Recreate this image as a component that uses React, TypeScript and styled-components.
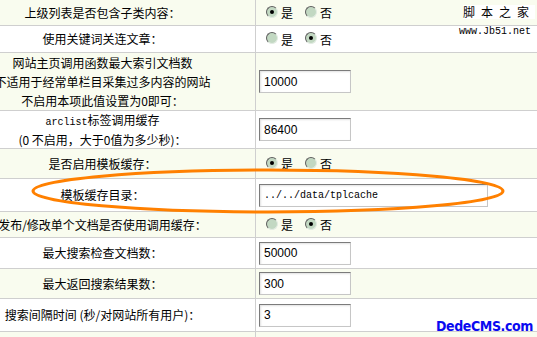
import React from 'react';
import styled, { createGlobalStyle } from 'styled-components';

const GlobalStyle = createGlobalStyle`
  html, body {
    margin: 0;
    padding: 0;
    background: #fff;
    overflow: hidden;
  }
`;

const Page = styled.div`
  position: relative;
  width: 537px;
  height: 337px;
  overflow: hidden;
  font-family: "Noto Sans CJK SC", "Liberation Sans", sans-serif;
  font-size: 12px;
  color: #000;
`;

const Table = styled.div`
  margin-left: -50px;
  width: 640px;
  display: flex;
  flex-direction: column;
`;

const Row = styled.div<{ $h: number; $alt: boolean }>`
  display: grid;
  grid-template-columns: 306px 1fr;
  height: ${(p: { $h: number }) => p.$h}px;
  background: ${(p: { $alt: boolean }) => (p.$alt ? '#f9fcef' : '#ffffff')};
  border-bottom: 1px solid #cfcfcf;
  flex-shrink: 0;
`;

const Label = styled.div<{ $lh: number }>`
  display: flex;
  flex-direction: column;
  align-items: center;
  justify-content: center;
  text-align: center;
  white-space: nowrap;
  line-height: ${(p: { $lh: number }) => p.$lh}px;
  border-right: 1px solid #cfcfcf;
`;

const Mono = styled.span`
  font-family: "Liberation Mono", "DejaVu Sans Mono", monospace;
  font-size: 10px;
`;

const Value = styled.div`
  display: flex;
  align-items: center;
  padding-left: 3px;
`;

const RadioGroup = styled.div`
  display: flex;
  align-items: center;
  padding-left: 7px;
`;

const RadioItem = styled.label`
  display: flex;
  align-items: center;
  margin-right: 12px;
`;

const RadioDot = styled.span<{ $on: boolean }>`
  position: relative;
  width: 12px;
  height: 12px;
  border-radius: 50%;
  box-sizing: border-box;
  background: #c2d8c2;
  border: 1px solid;
  border-color: #5f5f5f #e2ebe2 #e2ebe2 #5f5f5f;
  margin-right: 3px;
  margin-top: -2px;

  &::after {
    content: '';
    display: ${(p: { $on: boolean }) => (p.$on ? 'block' : 'none')};
    position: absolute;
    left: 3px;
    top: 3px;
    width: 4px;
    height: 4px;
    border-radius: 50%;
    background: #000;
  }
`;

const TextInput = styled.div<{ $w: number; $mono?: boolean }>`
  width: ${(p: { $w: number }) => p.$w}px;
  height: 23px;
  box-sizing: border-box;
  background: #fff;
  border: 1px solid;
  border-color: #7b7b7b #c6c6c6 #c6c6c6 #7b7b7b;
  box-shadow: inset 1px 1px 2px rgba(0, 0, 0, 0.12);
  display: flex;
  align-items: center;
  padding-left: 4px;
  font-family: ${(p: { $mono?: boolean }) =>
    p.$mono ? '"Liberation Mono", "DejaVu Sans Mono", monospace' : '"Liberation Sans", Arial, sans-serif'};
  font-size: ${(p: { $mono?: boolean }) => (p.$mono ? '10px' : '12px')};
`;

const Watermark = styled.div`
  position: absolute;
  top: 5px;
  right: 8px;
  display: flex;
  flex-direction: column;
  align-items: flex-end;
`;

const WaterTitle = styled.span`
  background: #fff;
  letter-spacing: 6px;
  margin-right: -6px;
  line-height: 14px;
  font-size: 12px;
`;

const WaterUrl = styled.span`
  font-family: "Liberation Mono", "DejaVu Sans Mono", monospace;
  font-size: 10px;
  line-height: 12px;
  margin-top: 7px;
  margin-right: -2px;
`;

const DedeMark = styled.div`
  position: absolute;
  right: 4px;
  bottom: 4px;
  font-family: "DejaVu Sans Condensed", "DejaVu Sans", sans-serif;
  font-stretch: condensed;
  font-weight: bold;
  font-size: 14px;
  letter-spacing: -0.4px;
  color: #0a0af0;
  line-height: 14px;
`;

const Overlay = styled.svg`
  position: absolute;
  left: 0;
  top: 0;
  pointer-events: none;
`;

type RowData = {
  h: number;
  lh?: number;
  label: React.ReactNode[];
  kind: 'radio' | 'input' | 'empty';
  on?: boolean;
  value?: string;
  w?: number;
  mono?: boolean;
};

const rows: RowData[] = [
  { h: 25, label: ['上级列表是否包含子类内容：'], kind: 'radio', on: true },
  { h: 26, label: ['使用关键词关连文章：'], kind: 'radio', on: false },
  {
    h: 57,
    lh: 19,
    label: ['网站主页调用函数最大索引文档数', '不适用于经常单栏目采集过多内容的网站', '不启用本项此值设置为0即可：'],
    kind: 'input',
    value: '10000',
  },
  {
    h: 37,
    lh: 17,
    label: [
      <span key="a"><Mono>arclist</Mono>标签调用缓存</span>,
      '(0 不启用，大于0值为多少秒)：',
    ],
    kind: 'input',
    value: '86400',
  },
  { h: 29, label: ['是否启用模板缓存：'], kind: 'radio', on: true },
  { h: 32, label: ['模板缓存目录：'], kind: 'input', value: '../../data/tplcache', w: 229, mono: true },
  { h: 25, label: ['发布/修改单个文档是否使用调用缓存：'], kind: 'radio', on: false },
  { h: 30, label: ['最大搜索检查文档数：'], kind: 'input', value: '50000' },
  { h: 29, label: ['最大返回搜索结果数：'], kind: 'input', value: '300' },
  { h: 32, label: ['搜索间隔时间 (秒/对网站所有用户)：'], kind: 'input', value: '3' },
  { h: 30, label: [''], kind: 'empty' },
];

const Radios: React.FC<{ on: boolean }> = ({ on }) => (
  <RadioGroup>
    <RadioItem>
      <RadioDot $on={on} />是
    </RadioItem>
    <RadioItem>
      <RadioDot $on={!on} />否
    </RadioItem>
  </RadioGroup>
);

const App: React.FC = () => {
  return (
    <Page>
      <GlobalStyle />
      <Table>
        {rows.map((row, i) => (
          <Row key={i} $h={row.h} $alt={i % 2 === 0}>
            <Label $lh={row.lh ?? 16}>
              {row.label.map((line, j) => (
                <div key={j}>{line}</div>
              ))}
            </Label>
            <Value>
              {row.kind === 'radio' && <Radios on={!!row.on} />}
              {row.kind === 'input' && (
                <TextInput $w={row.w ?? 92} $mono={row.mono}>
                  {row.value}
                </TextInput>
              )}
            </Value>
          </Row>
        ))}
      </Table>

      <Watermark>
        <WaterTitle>脚本之家</WaterTitle>
        <WaterUrl>www.Jb51.net</WaterUrl>
      </Watermark>

      <Overlay width="537" height="337" viewBox="0 0 537 337">
        <ellipse cx="268" cy="191" rx="235" ry="21" fill="none" stroke="#ff8000" strokeWidth="3" />
      </Overlay>

      <DedeMark>DedeCMS.com</DedeMark>
    </Page>
  );
};

export default App;
